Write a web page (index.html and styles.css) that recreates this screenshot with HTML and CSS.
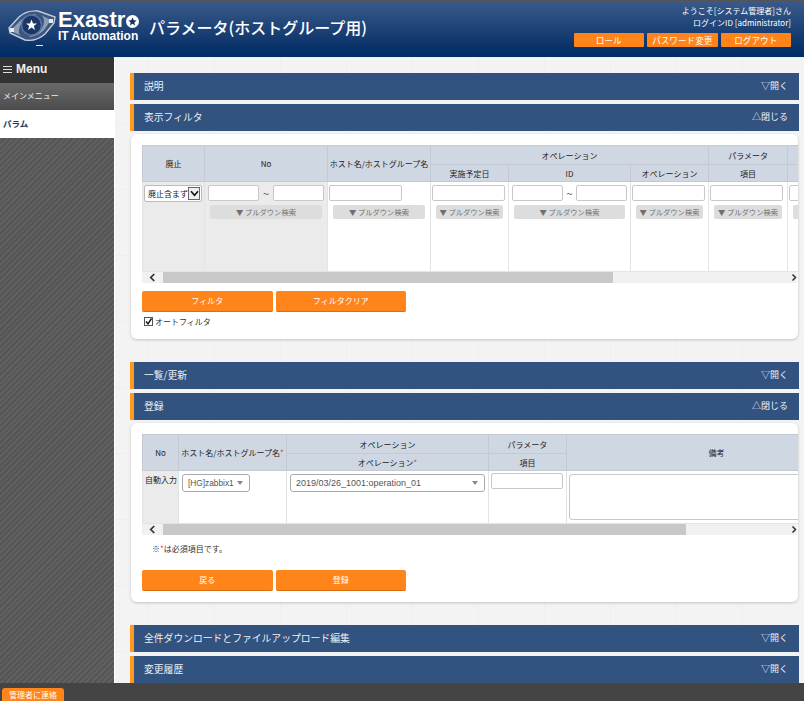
FILE: index.html
```html
<!DOCTYPE html>
<html lang="ja">
<head>
    <meta charset="UTF-8">
    <title>パラメータ(ホストグループ用)</title>
    <link rel="stylesheet" href="styles.css">
</head>
<body>
<div class="page">
    <header class="top">
        <div class="logo">
            <svg class="logo-mark" viewBox="0 0 48 38" width="48" height="38">
                <path d="M1 19 L11 8 Q19 1 30 2 L47 8 L46 14 L37 25 Q28 33 17 31 L2 24 Z" fill="#3b5680" stroke="#c3ccd9" stroke-width="1.400"/>
                <path d="M5 19 L13 11 Q20 5 29 5 L22 8 Q12 12 11 21 Q10 25 14 27 L5 23 Z" fill="#8c9db6"/>
                <path d="M43 11 L36 21 Q29 28 20 28 L27 25 Q36 21 36 12 Q36 8 33 6 Z" fill="#8c9db6"/>
                <circle cx="23.500" cy="16" r="10" fill="#1b3768" stroke="#5b7399" stroke-width="1.500"/>
                <polygon points="23.500,10.500 25,14.500 29,14.500 25.800,17 27,21 23.500,18.600 20,21 21.200,17 18,14.500 22,14.500" fill="#fff"/>
                <rect x="2" y="19" width="4" height="4" fill="#e4e8ef"/>
                <rect x="41" y="10" width="4" height="4" fill="#e4e8ef"/>
                <rect x="28" y="36" width="7" height="1" fill="#dfe4ec"/>
            </svg>
            <div class="logo-words">
                <div class="logo-name">Exastr<svg class="logo-o" viewBox="0 0 14 14" width="13" height="13"><circle cx="7" cy="7" r="7" fill="#fff"/><polygon points="7,2.500 8.300,5.600 11.500,5.800 9,8 9.800,11.200 7,9.500 4.200,11.200 5,8 2.500,5.800 5.700,5.600" fill="#15315f"/></svg></div>
                <div class="logo-sub">IT Automation</div>
            </div>
        </div>
        <h1 class="page-title">パラメータ(ホストグループ用)</h1>
        <div class="user">
            <p>ようこそ[システム管理者]さん</p>
            <p>ログインID [administrator]</p>
            <div class="user-btns">
                <a class="user-btn">ロール</a>
                <a class="user-btn">パスワード変更</a>
                <a class="user-btn">ログアウト</a>
            </div>
        </div>
    </header>

    <div class="middle">
        <nav class="side">
            <div class="side-head"><span class="burger"></span>Menu</div>
            <div class="side-main">メインメニュー</div>
            <div class="side-item">パラム</div>
        </nav>

        <main class="main">
            <div class="bar"><span>説明</span><span class="toggle">▽開く</span></div>
            <div class="bar"><span>表示フィルタ</span><span class="toggle">△閉じる</span></div>
            <section class="panel panel-filter">
                <div class="table-wrap">
                    <table class="grid grid-filter">
                        <colgroup>
                            <col class="w62"><col class="w123"><col class="w103"><col class="w78"><col class="w122"><col class="w78"><col class="w79"><col class="w100">
                        </colgroup>
                        <thead>
                            <tr>
                                <th rowspan="2">廃止</th>
                                <th rowspan="2">No</th>
                                <th rowspan="2">ホスト名/ホストグループ名</th>
                                <th colspan="3">オペレーション</th>
                                <th>パラメータ</th>
                                <th></th>
                            </tr>
                            <tr>
                                <th>実施予定日</th>
                                <th>ID</th>
                                <th>オペレーション</th>
                                <th>項目</th>
                                <th></th>
                            </tr>
                        </thead>
                        <tbody>
                            <tr>
                                <td class="grey">
                                    <div class="sel">廃止含まず<span class="sel-arrow"><svg viewBox="0 0 10 8" width="9" height="7"><path d="M1 1.500 L5 6 L9 1.500" fill="none" stroke="#111" stroke-width="1.800"/></svg></span></div>
                                </td>
                                <td class="grey">
                                    <div class="range"><input class="inp" type="text"><span class="tilde">~</span><input class="inp" type="text"></div>
                                    <div class="pull">▼ プルダウン検索</div>
                                </td>
                                <td>
                                    <input class="inp inp-one" type="text">
                                    <div class="pull">▼ プルダウン検索</div>
                                </td>
                                <td>
                                    <input class="inp inp-one" type="text">
                                    <div class="pull">▼ プルダウン検索</div>
                                </td>
                                <td>
                                    <div class="range"><input class="inp" type="text"><span class="tilde">~</span><input class="inp" type="text"></div>
                                    <div class="pull">▼ プルダウン検索</div>
                                </td>
                                <td>
                                    <input class="inp inp-one" type="text">
                                    <div class="pull">▼ プルダウン検索</div>
                                </td>
                                <td>
                                    <input class="inp inp-one" type="text">
                                    <div class="pull">▼ プルダウン検索</div>
                                </td>
                                <td>
                                    <input class="inp inp-one" type="text">
                                    <div class="pull">▼ プルダウン検索</div>
                                </td>
                            </tr>
                        </tbody>
                    </table>
                </div>
                <div class="scroll">
                    <span class="scroll-left"><svg viewBox="0 0 8 10" width="7" height="9"><path d="M6 1 L2 5 L6 9" fill="none" stroke="#333" stroke-width="2"/></svg></span>
                    <span class="thumb thumb-filter"></span>
                    <span class="scroll-right"><svg viewBox="0 0 8 10" width="6" height="9"><path d="M2 1 L6 5 L2 9" fill="none" stroke="#333" stroke-width="2"/></svg></span>
                </div>
                <div class="actions">
                    <a class="btn">フィルタ</a>
                    <a class="btn">フィルタクリア</a>
                </div>
                <label class="auto"><svg class="check" viewBox="0 0 9 9" width="9" height="9"><rect x=".5" y=".5" width="8" height="8" fill="#fff" stroke="#555"/><path d="M2 4.500 L4 6.800 L7.500 1.500" fill="none" stroke="#111" stroke-width="1.400"/></svg>オートフィルタ</label>
            </section>

            <div class="bar bar-after"><span>一覧/更新</span><span class="toggle">▽開く</span></div>
            <div class="bar"><span>登録</span><span class="toggle">△閉じる</span></div>
            <section class="panel panel-entry">
                <div class="table-wrap">
                    <table class="grid grid-entry">
                        <colgroup>
                            <col class="w36"><col class="w108"><col class="w202"><col class="w78"><col class="w300">
                        </colgroup>
                        <thead>
                            <tr>
                                <th rowspan="2">No</th>
                                <th rowspan="2">ホスト名/ホストグループ名<span class="req">*</span></th>
                                <th>オペレーション</th>
                                <th>パラメータ</th>
                                <th rowspan="2">備考</th>
                            </tr>
                            <tr>
                                <th>オペレーション<span class="req">*</span></th>
                                <th>項目</th>
                            </tr>
                        </thead>
                        <tbody>
                            <tr>
                                <td class="grey auto-in">自動入力</td>
                                <td><div class="drop drop-host">[HG]zabbix1<span class="caret"></span></div></td>
                                <td><div class="drop drop-op">2019/03/26_1001:operation_01<span class="caret"></span></div></td>
                                <td><input class="inp inp-item" type="text"></td>
                                <td><textarea class="note"></textarea></td>
                            </tr>
                        </tbody>
                    </table>
                </div>
                <div class="scroll">
                    <span class="scroll-left"><svg viewBox="0 0 8 10" width="7" height="9"><path d="M6 1 L2 5 L6 9" fill="none" stroke="#333" stroke-width="2"/></svg></span>
                    <span class="thumb thumb-entry"></span>
                    <span class="scroll-right"><svg viewBox="0 0 8 10" width="6" height="9"><path d="M2 1 L6 5 L2 9" fill="none" stroke="#333" stroke-width="2"/></svg></span>
                </div>
                <p class="must">※<span class="req">*</span>は必須項目です。</p>
                <div class="actions">
                    <a class="btn">戻る</a>
                    <a class="btn">登録</a>
                </div>
            </section>

            <div class="bar bar-after"><span>全件ダウンロードとファイルアップロード編集</span><span class="toggle">▽開く</span></div>
            <div class="bar"><span>変更履歴</span><span class="toggle">▽開く</span></div>
        </main>
    </div>

    <footer class="foot"><a class="foot-btn">管理者に連絡</a></footer>
</div>
</body>
</html>
```

FILE: styles.css
```css
*{
    margin: 0;
    padding: 0;
    box-sizing: border-box;
}
html,body{
    height: 100%;
    overflow: hidden;
}
body{
    font-family: "Noto Sans CJK JP", "Liberation Sans", sans-serif;
    font-size: 9px;
    color: #333;
}
.page{
    height: 701px;
    display: flex;
    flex-direction: column;
}

/* header */
.top{
    height: 57px;
    flex: none;
    display: flex;
    align-items: flex-start;
    padding-left: 8px;
    border-top: 1px solid #555;
    background: linear-gradient(#3a5a8a, #002a63);
    color: #fff;
}
.logo{
    display: flex;
    margin-top: 8px;
    width: 141px;
}
.logo-words{
    margin-left: 2px;
    font-family: "Liberation Sans", sans-serif;
    font-weight: bold;
    white-space: nowrap;
}
.logo-name{
    display: flex;
    align-items: flex-end;
    height: 21px;
    font-size: 22px;
    line-height: 21px;
}
.logo-o{
    margin: 0 0 2px 1px;
}
.logo-sub{
    font-size: 12px;
    line-height: 13px;
}
.page-title{
    margin-top: 14px;
    font-size: 16px;
    line-height: 24px;
    font-weight: 500;
}
.user{
    margin-left: auto;
    padding: 4px 13px 0 0;
    text-align: right;
    font-size: 8px;
    line-height: 12px;
}
.user-btns{
    display: flex;
    justify-content: flex-end;
    gap: 3px;
    margin-top: 4px;
}
.user-btn{
    width: 70.500px;
    height: 14px;
    line-height: 14px;
    text-align: center;
    font-size: 8.600px;
    background: #ff8419;
    color: #fff;
    border-radius: 1px;
}

/* side menu */
.middle{
    flex: 1;
    min-height: 0;
    display: flex;
}
.side{
    width: 115px;
    flex: none;
    border-right: 1px solid #fff;
    background: repeating-linear-gradient(135deg, #555 0, #555 2px, #606060 2px, #606060 4px);
}
.side-head{
    height: 26px;
    line-height: 24px;
    padding-left: 3px;
    background: #333;
    color: #eee;
    font-family: "Liberation Sans", sans-serif;
    font-size: 12px;
    font-weight: bold;
}
.burger{
    display: inline-block;
    width: 9px;
    height: 7px;
    margin-right: 4px;
    border-top: 1px solid #ddd;
    border-bottom: 1px solid #ddd;
    background: linear-gradient(#ddd, #ddd) center / 100% 1px no-repeat;
}
.side-main{
    height: 27px;
    line-height: 25px;
    padding-left: 3px;
    background: linear-gradient(#6a6a6a, #4c4c4c);
    color: #f1f1f1;
    font-size: 8px;
}
.side-item{
    height: 28px;
    line-height: 26px;
    padding-left: 3px;
    background: #fff;
    color: #1d2f4f;
    font-size: 8.500px;
    font-weight: bold;
}

/* main area */
.main{
    flex: 1;
    min-width: 0;
    overflow: hidden;
    padding: 16px 5px 0 15px;
    background-color: #f3f3f3;
    background-image: linear-gradient(90deg, #efefef 1px, transparent 1px), linear-gradient(#efefef 1px, transparent 1px);
    background-size: 66px 66px;
    background-position: 33px 0;
}
.bar{
    height: 27px;
    margin-bottom: 4px;
    padding: 0 11px 2px 10px;
    display: flex;
    justify-content: space-between;
    align-items: center;
    flex: none;
    background: #32527f;
    border-left: 4px solid #ff9a1f;
    color: #eef1f5;
    font-size: 9.800px;
}
.toggle{
    font-size: 9px;
}
.bar-after{
    margin-top: 23px;
}
.panel{
    margin-top: -1px;
    padding: 11px 0 0 11px;
    margin-left: 1px;
    width: 667px;
    background: #fff;
    border-radius: 6px;
    box-shadow: 0 1px 3px rgba(0,0,0,.2);
}
.panel-filter{
    height: 205px;
}
.panel-entry{
    height: 179px;
}

/* tables */
.table-wrap{
    overflow: hidden;
}
.grid{
    border-collapse: collapse;
    table-layout: fixed;
}
.grid-filter{
    width: 745px;
}
.grid-entry{
    width: 724px;
}
.w36{width: 36px;}
.w62{width: 62px;}
.w78{width: 78px;}
.w79{width: 79px;}
.w100{width: 100px;}
.w103{width: 103px;}
.w108{width: 108px;}
.w122{width: 122px;}
.w123{width: 123px;}
.w202{width: 202px;}
.w300{width: 300px;}
.grid th{
    height: 19px;
    background: #cfd7e2;
    border: 1px solid #c3cad4;
    font-size: 8px;
    font-weight: 400;
    color: #222;
    white-space: nowrap;
}
.grid thead tr + tr th{
    height: 17px;
}
.grid td{
    vertical-align: top;
    padding: 3px 2px;
    border: 1px solid #e4e4e4;
    border-top: 0;
    background: #fff;
}
.grid-filter td{
    height: 90px;
}
.grid-entry td{
    height: 52px;
}
.grid td.grey{
    background: #ebebeb;
}
.req{
    color: #e0332c;
}
.inp{
    display: block;
    height: 16px;
    width: 51px;
    border: 1px solid #c8c8c8;
    border-radius: 2px;
    background: #fff;
}
.inp-one{
    width: 73px;
    margin-left: -1px;
}
.range{
    display: flex;
    align-items: center;
    justify-content: space-between;
    padding: 0 1px;
}
.tilde{
    font-size: 11px;
    color: #555;
}
.pull{
    height: 14px;
    line-height: 14px;
    margin: 4px 3px 0;
    text-align: center;
    background: #ddd;
    border-radius: 2px;
    color: #707070;
    font-size: 7.300px;
    white-space: nowrap;
    overflow: hidden;
}
.sel{
    display: flex;
    align-items: center;
    justify-content: space-between;
    width: 58px;
    height: 17px;
    margin-left: -1px;
    padding: 0 1px 0 3px;
    background: #fff;
    border: 1px solid #bbb;
    border-radius: 2px;
    color: #222;
    font-size: 8px;
    white-space: nowrap;
}
.sel-arrow{
    display: flex;
    align-items: center;
    justify-content: center;
    width: 13px;
    height: 13px;
    border: 1px solid #666;
    background: #eee;
}
.auto-in{
    font-size: 8px;
    white-space: nowrap;
    color: #222;
}
.drop{
    display: flex;
    align-items: center;
    justify-content: space-between;
    height: 18px;
    padding: 0 6px 0 5px;
    background: #fff;
    border: 1px solid #aaa;
    border-radius: 3px;
    color: #555;
    font-family: "Liberation Sans", "Noto Sans CJK JP", sans-serif;
    font-size: 9px;
    white-space: nowrap;
}
.drop-host{
    width: 68px;
    margin-left: 1px;
    font-size: 8.300px;
}
.drop-op{
    width: 195px;
    margin-left: 1px;
}
.caret{
    width: 0;
    height: 0;
    border-left: 3px solid transparent;
    border-right: 3px solid transparent;
    border-top: 4px solid #888;
}
.inp-item{
    width: 72px;
    margin-top: -1px;
}
.note{
    display: block;
    width: 290px;
    height: 46px;
    border: 1px solid #c8c8c8;
    border-radius: 3px;
    resize: none;
}

/* fake scroll bar */
.scroll{
    display: flex;
    height: 11px;
    width: 655px;
    background: #f1f1f1;
}
.scroll-left{
    width: 21px;
    display: flex;
    align-items: center;
    justify-content: center;
    flex: none;
}
.scroll-right{
    margin-left: auto;
    width: 6px;
    display: flex;
    align-items: center;
    flex: none;
}
.thumb{
    background: #c8c8c8;
}
.thumb-filter{
    width: 450px;
}
.thumb-entry{
    width: 523px;
}

/* buttons */
.actions{
    display: flex;
    gap: 3px;
    margin-top: 8px;
}
.btn{
    width: 130.500px;
    height: 21px;
    line-height: 20px;
    text-align: center;
    background: #ff8419;
    border-bottom: 1px solid #d96d10;
    border-radius: 2px;
    color: #fff;
    font-size: 8px;
}
.auto{
    display: flex;
    align-items: center;
    margin: 4px 0 0 2px;
    font-size: 8px;
    color: #333;
}
.check{
    margin-right: 2px;
}
.must{
    margin: 7px 0 0 10px;
    font-size: 8px;
    line-height: 14px;
}
.panel-entry .actions{
    margin-top: 14px;
}

/* footer */
.foot{
    height: 18px;
    flex: none;
    padding: 5px 0 0 2px;
    background: #444;
}
.foot-btn{
    display: block;
    width: 62px;
    height: 13px;
    line-height: 13px;
    text-align: center;
    background: #ff8419;
    border-radius: 3px 3px 0 0;
    color: #fff;
    font-size: 8px;
}
```
